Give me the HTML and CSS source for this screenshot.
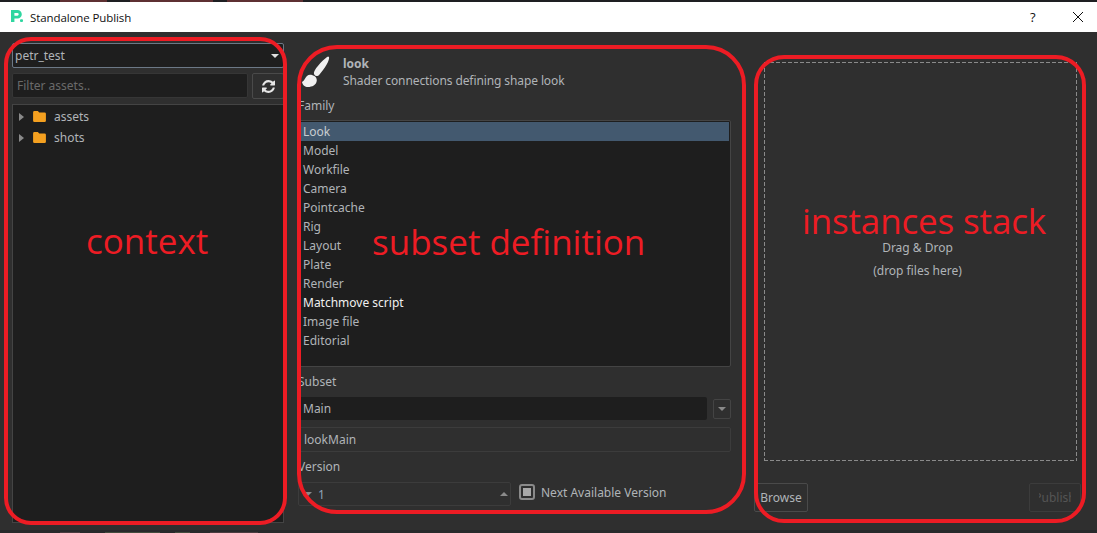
FILE: index.html
```html
<!DOCTYPE html>
<html lang="en">
<head>
  <meta charset="UTF-8" />
  <title>Standalone Publish</title>
  <link rel="stylesheet" href="styles.css">
</head>
<body>
  <div class="desk-top"></div>

  <header class="titlebar">
    <svg class="logo" width="14" height="14" viewBox="0 0 14 14">
      <path d="M1 1h6.500a4.300 4.300 0 0 1 4.300 4.300a4.300 4.300 0 0 1-4.300 4.300H4.400V13H1zM4.400 3.900v2.800h2.900a1.400 1.400 0 0 0 0-2.800z" fill="#2fd6a0" fill-rule="evenodd"/>
      <rect x="10" y="10.300" width="3" height="2.700" rx="1" fill="#2fd6a0"/>
    </svg>
    <span class="title">Standalone Publish</span>
    <span class="help">?</span>
    <svg class="close" width="12" height="12" viewBox="0 0 12 12">
      <path d="M1 1l10 10M11 1L1 11" stroke="#111" stroke-width="1" fill="none"/>
    </svg>
  </header>

  <main class="window">
    <section class="context">
      <div class="combo">
        <span>petr_test</span>
        <i class="arrow-down light"></i>
      </div>
      <div class="filter-row">
        <div class="filter">Filter assets..</div>
        <button class="refresh">
          <svg width="13" height="13" viewBox="0 0 1536 1536">
            <path fill="#e6e6e6" d="M1511 928q0 5-1 7-64 268-268 434.500t-478 166.500q-146 0-282.500-55t-243.500-157l-129 129q-19 19-45 19t-45-19-19-45v-448q0-26 19-45t45-19h448q26 0 45 19t19 45-19 45l-137 137q71 66 161 102t187 36q134 0 250-65t186-179q11-17 53-117 8-23 30-23h192q13 0 22.500 9.500t9.500 22.500zm25-800v448q0 26-19 45t-45 19h-448q-26 0-45-19t-19-45 19-45l138-138q-148-137-349-137-134 0-250 65t-186 179q-11 17-53 117-8 23-30 23h-199q-13 0-22.500-9.500t-9.500-22.500v-7q65-268 270-434.500t480-166.500q146 0 284 55.500t245 156.500l130-129q19-19 45-19t45 19 19 45z"/>
          </svg>
        </button>
      </div>
      <div class="tree">
        <div class="tree-row">
          <i class="arrow-right"></i>
          <svg class="folder" width="13" height="11" viewBox="0 0 14 12"><path d="M1.500 0h3.700l1.500 1.600h5.800A1.500 1.500 0 0 1 14 3.100v7.400a1.500 1.500 0 0 1-1.500 1.500h-11A1.500 1.500 0 0 1 0 10.500v-9A1.500 1.500 0 0 1 1.500 0z" fill="#f4a020"/></svg>
          <span>assets</span>
        </div>
        <div class="tree-row">
          <i class="arrow-right"></i>
          <svg class="folder" width="13" height="11" viewBox="0 0 14 12"><path d="M1.500 0h3.700l1.500 1.600h5.800A1.500 1.500 0 0 1 14 3.100v7.400a1.500 1.500 0 0 1-1.500 1.500h-11A1.500 1.500 0 0 1 0 10.500v-9A1.500 1.500 0 0 1 1.500 0z" fill="#f4a020"/></svg>
          <span>shots</span>
        </div>
      </div>
    </section>

    <section class="subset">
      <div class="family-head">
        <svg class="brush" width="32" height="34" viewBox="0 0 32 34">
          <path d="M30 2C31 5 26 13 20.500 19.500C19 21.500 16.500 21.500 15.500 20C14.500 18.500 14.800 17 16 15C19 10 25 4 29 1.500z" fill="#f0f0f0"/>
          <path d="M3 27C6 26 6.500 20 11 19.800C14.500 19.800 18 22 17.800 25.500C17.500 30 13 32 9 32C6 32 3.500 30 3 27z" fill="#f0f0f0"/>
        </svg>
        <div class="family-text">
          <strong>look</strong>
          <span>Shader connections defining shape look</span>
        </div>
      </div>

      <label class="field-label family-label">Family</label>
      <ul class="family-list">
        <li class="selected">Look</li>
        <li>Model</li>
        <li>Workfile</li>
        <li>Camera</li>
        <li>Pointcache</li>
        <li>Rig</li>
        <li>Layout</li>
        <li>Plate</li>
        <li>Render</li>
        <li class="bright">Matchmove script</li>
        <li>Image file</li>
        <li>Editorial</li>
      </ul>

      <label class="field-label subset-label">Subset</label>
      <div class="subset-row">
        <div class="subset-input">Main</div>
        <button class="subset-menu"><i class="arrow-down"></i></button>
      </div>
      <div class="subset-result">lookMain</div>

      <label class="field-label version-label">Version</label>
      <div class="version-row">
        <div class="spinner">
          <i class="arrow-down"></i>
          <span>1</span>
          <i class="arrow-up"></i>
        </div>
        <span class="checkbox"><i></i></span>
        <span class="check-label">Next Available Version</span>
      </div>
    </section>

    <section class="instances">
      <div class="drop-zone">
        <span class="drop-title">Drag &amp; Drop</span>
        <span class="drop-hint">(drop files here)</span>
      </div>
      <div class="actions">
        <button class="browse">Browse</button>
        <button class="publish"><span>Publish</span></button>
      </div>
    </section>
  </main>

  <div class="desk-bottom"></div>

  <!-- hand drawn notes on top of the window -->
  <svg class="rings" width="1097" height="533" viewBox="0 0 1097 533">
    <rect x="6" y="39" width="279" height="484" rx="25" />
    <rect x="299" y="47" width="445" height="465" rx="38" />
    <rect x="756" y="57" width="328" height="464" rx="28" />
  </svg>
  <div class="note note-context">context</div>
  <div class="note note-subset">subset definition</div>
  <div class="note note-instances">instances stack</div>
</body>
</html>
```

FILE: styles.css
```css
* {
  box-sizing: border-box;
}

html, body {
  height: 100%;
}

body {
  margin: 0;
  width: 1097px;
  height: 533px;
  overflow: hidden;
  position: relative;
  display: flex;
  flex-direction: column;
  background: #2f2f2f;
  color: #b0b4b8;
  font-family: "Noto Sans", sans-serif;
  font-size: 12px;
}

button {
  font: inherit;
  color: inherit;
  background: none;
  padding: 0;
}

ul {
  list-style: none;
  margin: 0;
  padding: 0;
}

/* bits of the desktop behind the window */
.desk-top {
  height: 2px;
  background:
    linear-gradient(#5e3032, #5e3032) 60px 0 / 47px 2px no-repeat,
    linear-gradient(#5e3032, #5e3032) 130px 0 / 83px 2px no-repeat,
    linear-gradient(#5e3032, #5e3032) 227px 0 / 76px 2px no-repeat,
    #1e1f22;
}

.desk-bottom {
  height: 3px;
  background:
    linear-gradient(#4a3c40, #4a3c40) 60px 2px / 20px 1px no-repeat,
    linear-gradient(#434c3e, #434c3e) 105px 2px / 55px 1px no-repeat,
    linear-gradient(#434c3e, #434c3e) 175px 2px / 15px 1px no-repeat,
    linear-gradient(#4a3c40, #4a3c40) 210px 2px / 48px 1px no-repeat,
    #28292b;
}

.titlebar {
  height: 30px;
  background: #fff;
  color: #111;
  display: flex;
  align-items: center;
  padding-left: 10px;
}

.logo {
  margin: 0 6px 2px 0;
}

.title {
  font-family: "Open Sans", sans-serif;
  font-size: 11.500px;
  letter-spacing: -0.100px;
}

.help {
  margin-left: auto;
  font-family: "Open Sans", sans-serif;
  font-size: 13px;
  width: 9px;
}

.close {
  margin: 0 13px 0 33px;
}

.window {
  flex: 1;
  display: flex;
  min-height: 0;
  padding: 11px 16px 7px 12px;
}

/* arrows */
.arrow-down, .arrow-up, .arrow-right {
  display: block;
  width: 0;
  height: 0;
  flex: none;
}

.arrow-down {
  border-left: 4px solid transparent;
  border-right: 4px solid transparent;
  border-top: 4px solid #8a8a8a;
}

.arrow-down.light {
  border-top-color: #e0e0e0;
  margin-right: 1px;
}

.arrow-up {
  border-left: 4px solid transparent;
  border-right: 4px solid transparent;
  border-bottom: 4px solid #8a8a8a;
}

.arrow-right {
  border-top: 4px solid transparent;
  border-bottom: 4px solid transparent;
  border-left: 5px solid #8a8a8a;
}

/* context column */
.context {
  width: 272px;
  display: flex;
  flex-direction: column;
}

.combo {
  height: 25px;
  display: flex;
  align-items: center;
  justify-content: space-between;
  padding: 0 3px 0 2px;
  background: #1e1e1e;
  border: 1px solid #6c7886;
  border-radius: 2px;
}

.filter-row {
  display: flex;
  gap: 4px;
  margin-top: 5px;
}

.filter {
  flex: 1;
  height: 25px;
  line-height: 23px;
  padding-left: 4px;
  background: #1e1e1e;
  border: 1px solid #363636;
  border-radius: 2px;
  color: #6a6a6a;
}

.refresh {
  width: 32px;
  height: 26px;
  border: 1px solid #4a4a4a;
  border-radius: 2px;
  display: flex;
  align-items: center;
  justify-content: center;
}

.tree {
  flex: 1;
  margin-top: 5px;
  padding-top: 1px;
  background: #1e1e1e;
  border: 1px solid #444;
}

.tree-row {
  height: 21px;
  display: flex;
  align-items: center;
  padding-left: 6px;
}

.folder {
  margin-left: 9px;
  margin-right: 8px;
}

/* subset column */
.subset {
  width: 433px;
  margin-left: 14px;
  display: flex;
  flex-direction: column;
}

.family-head {
  display: flex;
  height: 45px;
  padding-top: 12px;
}

.brush {
  margin-left: 1px;
  flex: none;
}

.family-text {
  margin-left: 12px;
  display: flex;
  flex-direction: column;
}

.family-text strong {
  line-height: 17px;
}

.family-text span {
  line-height: 17px;
  letter-spacing: -0.100px;
}

.field-label {
  display: block;
  line-height: 17px;
}

.family-label {
  margin-top: 9px;
}

.family-list {
  margin-top: 6px;
  height: 247px;
  padding: 1px;
  background: #1e1e1e;
  border: 1px solid #444;
  border-radius: 2px;
}

.family-list li {
  height: 19px;
  line-height: 19px;
  padding-left: 3px;
}

.family-list .selected {
  background: #43596f;
  color: #c8ccd0;
}

.family-list .bright {
  color: #f0f0f0;
}

.subset-label {
  margin-top: 6px;
}

.subset-row {
  display: flex;
  align-items: center;
  margin-top: 7px;
}

.subset-input {
  width: 409px;
  height: 23px;
  line-height: 23px;
  padding-left: 5px;
  background: #1e1e1e;
  border-radius: 2px;
}

.subset-menu {
  width: 18px;
  height: 20px;
  margin-left: 6px;
  border: 1px solid #444;
  border-radius: 2px;
  display: flex;
  align-items: center;
  justify-content: center;
}

.subset-result {
  height: 25px;
  line-height: 23px;
  margin-top: 7px;
  padding-left: 5px;
  border: 1px solid #3c3c3c;
  border-radius: 2px;
}

.version-label {
  margin-top: 6px;
}

.version-row {
  display: flex;
  align-items: flex-start;
  margin-top: 7px;
}

.spinner {
  width: 213px;
  height: 24px;
  display: flex;
  align-items: center;
  padding: 0 2px 0 5px;
  border: 1px solid #3c3c3c;
  border-radius: 2px;
  color: #8fa4b8;
}

.spinner span {
  margin-left: 6px;
  flex: 1;
}

.checkbox {
  width: 16px;
  height: 16px;
  margin: 2px 0 0 8px;
  border: 2px solid #8a8a8a;
  border-radius: 3px;
  padding: 2px;
}

.checkbox i {
  display: block;
  width: 8px;
  height: 8px;
  background: #a8a8a8;
}

.check-label {
  margin: 2px 0 0 6px;
  line-height: 17px;
}

/* instances column */
.instances {
  width: 327px;
  margin-left: 23px;
  display: flex;
  flex-direction: column;
}

/* qt style dash: 4 on, 2 off */
.drop-zone {
  margin: 19px 4px 0 10px;
  height: 399px;
  background:
    repeating-linear-gradient(90deg, #8a8a8a 0 4px, transparent 4px 6px) 0 0 / 100% 1px no-repeat,
    repeating-linear-gradient(90deg, #8a8a8a 0 4px, transparent 4px 6px) 0 100% / 100% 1px no-repeat,
    repeating-linear-gradient(180deg, #8a8a8a 0 4px, transparent 4px 6px) 0 0 / 1px 100% no-repeat,
    repeating-linear-gradient(180deg, #8a8a8a 0 4px, transparent 4px 6px) 100% 0 / 1px 100% no-repeat;
  display: flex;
  flex-direction: column;
  align-items: center;
  padding: 177px 6px 0 0;
}

.drop-hint {
  margin-top: 6px;
}

.actions {
  display: flex;
  justify-content: space-between;
  margin-top: 22px;
}

.browse, .publish {
  height: 29px;
  border: 1px solid #4a4a4a;
  border-radius: 2px;
}

.browse {
  width: 54px;
}

.publish {
  width: 52px;
  border-color: #3c3c3c;
  color: #555;
  display: flex;
  align-items: center;
  justify-content: center;
}

.publish span {
  display: flex;
  justify-content: center;
  width: 32px;
  overflow: hidden;
}

/* notes */
.rings {
  position: absolute;
  left: 0;
  top: 0;
}

.rings rect {
  fill: none;
  stroke: #ed1c24;
  stroke-width: 4;
}

.note {
  position: absolute;
  color: #ed1c24;
  font-family: "Open Sans", sans-serif;
  font-size: 35px;
  line-height: 44px;
  white-space: nowrap;
}

.note-context {
  left: 86px;
  top: 219px;
}

.note-subset {
  left: 372px;
  top: 220px;
}

.note-instances {
  left: 802px;
  top: 199px;
  letter-spacing: -0.150px;
}
```
